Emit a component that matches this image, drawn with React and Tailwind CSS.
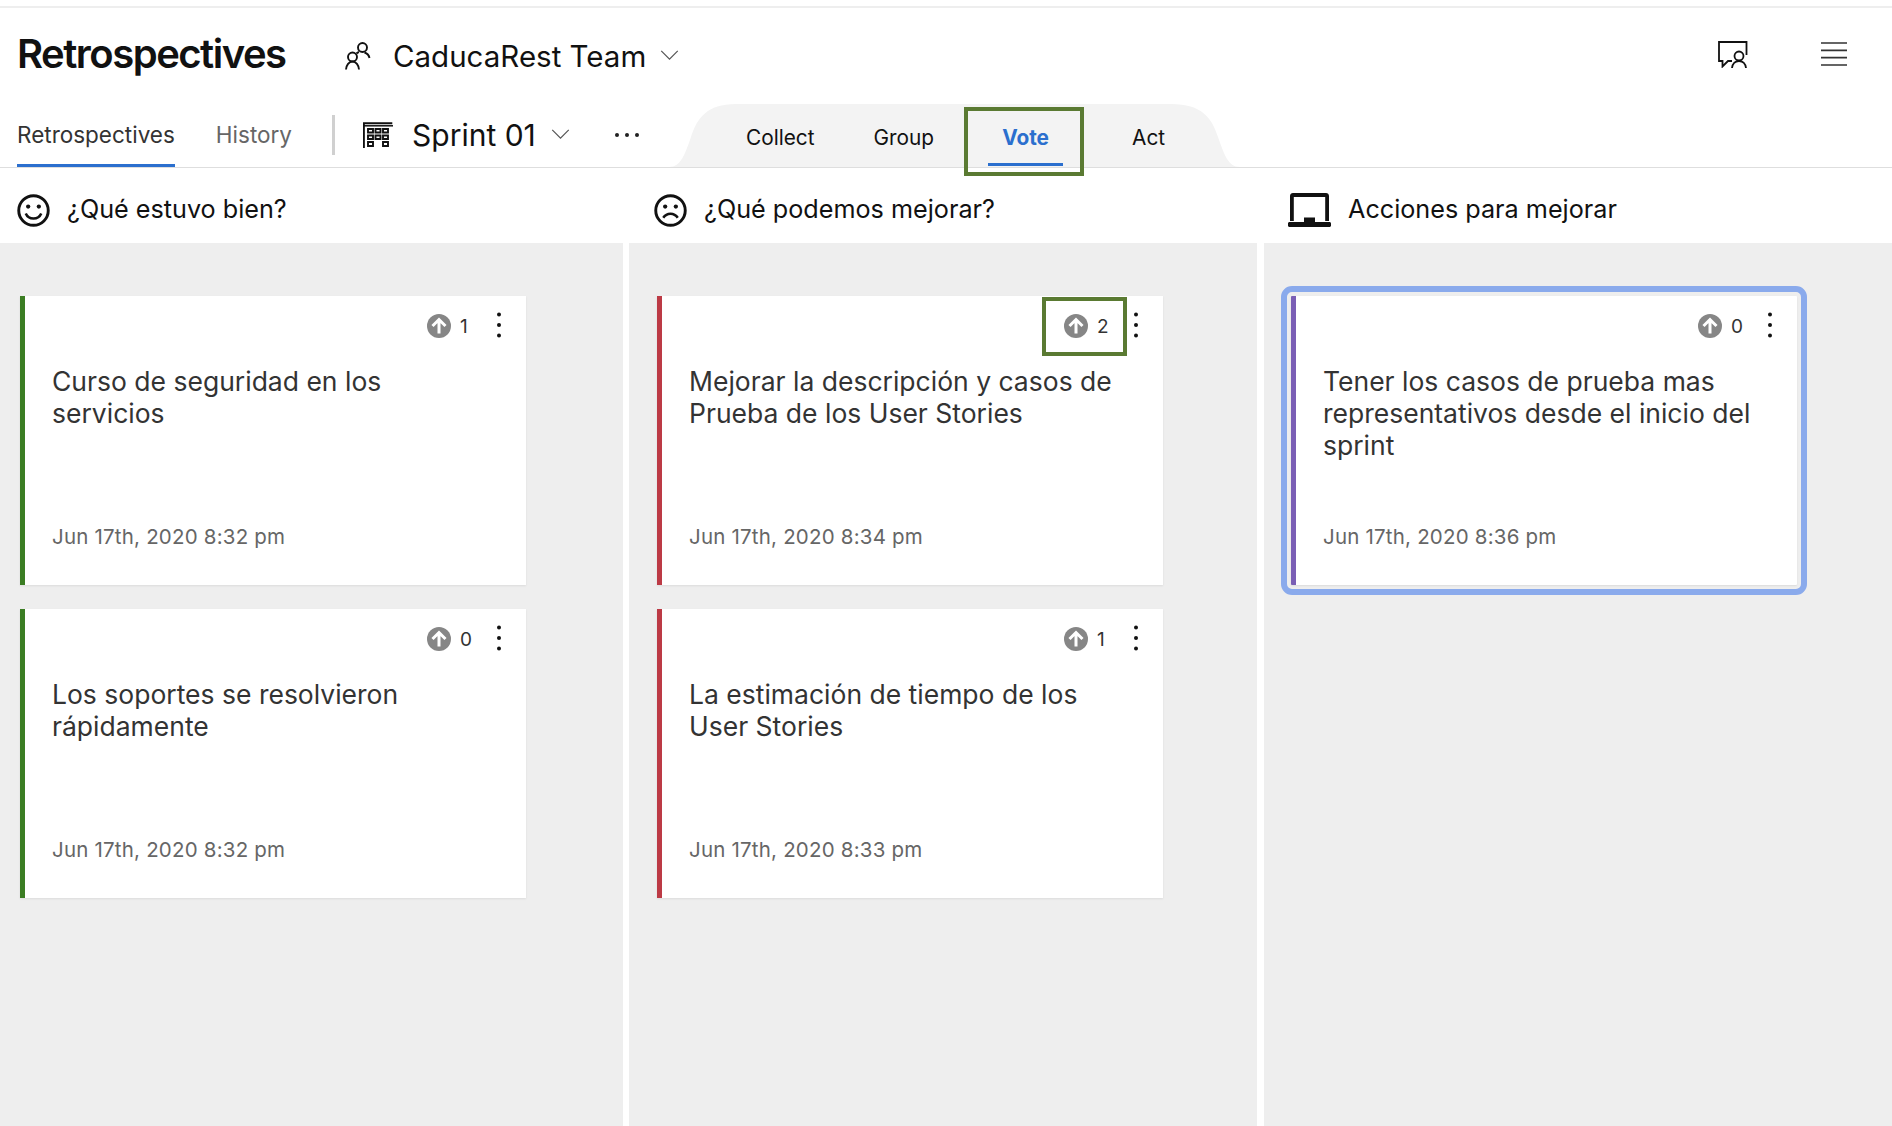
const Chevron = ({ className }) => (
  <svg viewBox="0 0 20 12" className={className} fill="none" stroke="#555" strokeWidth="1.3">
    <path d="M1 1l9 9 9-9" />
  </svg>
);

const Team = () => (
  <svg viewBox="0 0 26 28" className="w-[26px] h-[28px] shrink-0 mt-[4px]" fill="none" stroke="#111" strokeWidth="1.9">
    <circle cx="17.5" cy="5.5" r="4.5" />
    <path d="M19.5 10.5c2.5.8 4.5 3 5 5.5" />
    <circle cx="7.5" cy="15" r="4.5" />
    <path d="M1 27.5c.3-4.5 3-8 6.500-8s6.200 3.500 6.500 8" />
    <path d="M11.500 11.500c.6-.6 1.500-1.200 2.500-1.500" />
  </svg>
);

const Sprint = () => (
  <svg viewBox="0 0 30 26" className="w-[30px] h-[26px] shrink-0" fill="none" stroke="#111" strokeWidth="1.900">
    <path d="M.9 26V1.300h28.400" />
    <path d="M0 3.800h30" strokeWidth="1.500" />
    <path d="M5 7h5v3.500H5zM12.500 7h5v3.500h-5zM20 7h5v3.500h-5zM5 13.500h5V17H5zM12.500 13.500h5V17h-5zM20 13.500h5V17h-5zM5 20h5v4H5zM20 20h5v4h-5z" />
  </svg>
);

const Feedback = () => (
  <svg viewBox="0 0 30 27" className="w-[30px] h-[27px]" fill="none" stroke="#111" strokeWidth="1.800">
    <path d="M28.500 14V1H1v19h3.500v5.500L10 20h4" />
    <circle cx="21" cy="15" r="4.500" />
    <path d="M14 27c.4-4 3.200-7 7-7s6.600 3 7 7" />
  </svg>
);

const Menu = () => (
  <svg viewBox="0 0 26 24" className="w-[26px] h-[24px]" stroke="#333" strokeWidth="1.700">
    <path d="M0 1h26M0 8.300h26M0 15.600h26M0 23h26" />
  </svg>
);

const Face = ({ sad }) => (
  <svg viewBox="0 0 34 34" className="w-[33px] h-[33px] shrink-0" fill="none" stroke="#111" strokeWidth="3">
    <circle cx="17" cy="17" r="15.200" />
    <circle cx="11.500" cy="13" r="2.200" fill="#111" stroke="none" />
    <circle cx="22.500" cy="13" r="2.200" fill="#111" stroke="none" />
    {sad ? <path d="M9.500 24.500c2-3 4.500-4.200 7.500-4.200s5.500 1.200 7.500 4.200" strokeWidth="2.600" /> : <path d="M9 20c1.500 3.500 4.500 5.200 8 5.200s6.500-1.700 8-5.200" strokeWidth="2.600" />}
  </svg>
);

const Laptop = () => (
  <svg viewBox="0 0 43 34" className="w-[43px] h-[34px] shrink-0" fill="#111">
    <path d="M2 3C2 1.300 3.300 0 5 0h33c1.700 0 3 1.300 3 3v25h-3.800V4H5.800v24H2z" />
    <path d="M1.500 29H16v-4.500h11V29h14.500c.8 0 1.500.7 1.500 1.500v2c0 .8-.7 1.500-1.500 1.500h-40C.7 34 0 33.300 0 32.500v-2C0 29.700.7 29 1.500 29z" />
  </svg>
);

const VoteIcon = () => (
  <svg viewBox="0 0 24 24" className="w-[24px] h-[24px] shrink-0">
    <circle cx="12" cy="12" r="12" fill="#868686" />
    <path d="M12 19.500V6.500M5.500 12L12 5.500l6.500 6.500" fill="none" stroke="#fff" strokeWidth="3" />
  </svg>
);

const Dots = () => (
  <svg viewBox="0 0 6 26" className="w-[6px] h-[26px] shrink-0" fill="#111">
    <circle cx="3" cy="2.500" r="2" />
    <circle cx="3" cy="13" r="2" />
    <circle cx="3" cy="23.500" r="2" />
  </svg>
);

const Card = ({ bar, text, date, votes, boxed, focused }) => (
  <div
    className={`relative h-[289px] w-[506px] flex flex-col bg-white border-l-[5px] shadow-[0_1px_2px_rgba(0,0,0,0.08)] ${bar} ${
      focused ? "outline-[6px] outline-solid outline-[#8aaaec] outline-offset-[4px] rounded-[1px]" : ""
    }`}
  >
    <div className="flex items-center justify-end h-[48px] pt-[12px] pr-[24px]">
      <VoteIcon />
      <span className="ml-[9px] w-[10px] text-[19px] leading-none text-[#333]">{votes}</span>
      <span className="ml-[26px] -mt-[2px]">
        <Dots />
      </span>
    </div>
    <p className="mt-[21px] ml-[27px] w-[440px] text-[26.500px] leading-[32px] text-[#333]">{text}</p>
    <p className="mt-auto mb-[36px] pl-[27px] text-[20.500px] leading-[25px] tracking-[0.2px] text-[#666]">{date}</p>
    {boxed && <div className="absolute left-[380px] top-[1px] w-[85px] h-[59px] border-[4px] border-[#5a7a32]" />}
  </div>
);

const ColumnHeader = ({ icon, title, className }) => (
  <div className={`flex items-center h-[75px] pt-[9px] ${className}`}>
    {icon}
    <span className="text-[25.200px] text-[#111]">{title}</span>
  </div>
);

export default function App() {
  return (
    <div className="min-h-[1126px] flex flex-col bg-white font-['Inter','Liberation_Sans',sans-serif] overflow-hidden">
      <div className="h-[8px] border-b-[2px] border-[#eeeeee]" />
      <header className="h-[92px] flex items-center pl-[17px] pr-[45px]">
        <h1 className="w-[328px] text-[40px] leading-none font-semibold tracking-[-1.500px] text-[#111]">Retrospectives</h1>
        <Team />
        <span className="ml-[22px] mt-[6px] text-[29.500px] leading-none text-[#111]">CaducaRest Team</span>
        <Chevron className="ml-[14px] mt-[3px] w-[19px] h-[11px]" />
        <div className="ml-auto flex items-center gap-[73px]">
          <Feedback />
          <Menu />
        </div>
      </header>
      <nav className="relative h-[68px] flex items-start border-b-[1px] border-[#dedede] pl-[17px]">
        <div className="relative h-[67px] flex items-center text-[22.500px] text-[#333] pt-[2px]">
          Retrospectives
          <div className="absolute left-0 right-0 bottom-0 h-[3px] bg-[#2b6fce]" />
        </div>
        <div className="ml-[41px] h-[67px] flex items-center text-[22.500px] text-[#666] pt-[2px]">History</div>
        <div className="ml-[40px] mt-[15px] w-[3px] h-[40px] bg-[#d0d0d0]" />
        <div className="ml-[28px] h-[67px] flex items-center pt-[2px]">
          <Sprint />
        </div>
        <div className="ml-[19px] h-[67px] flex items-center text-[30px] text-[#111] pt-[3px]">Sprint 01</div>
        <div className="ml-[15px] h-[67px] flex items-center pt-[2px]">
          <Chevron className="w-[19px] h-[11px]" />
        </div>
        <div className="ml-[45px] h-[67px] flex items-center gap-[6px] pt-[3px]">
          <span className="w-[4px] h-[4px] rounded-full bg-[#222]" />
          <span className="w-[4px] h-[4px] rounded-full bg-[#222]" />
          <span className="w-[4px] h-[4px] rounded-full bg-[#222]" />
        </div>
        <div className="absolute left-[669px] top-[4px] w-[571px] h-[63px] flex text-[20.800px]">
          <svg viewBox="0 0 571 63" className="absolute inset-0 w-[571px] h-[63px]" fill="#f3f3f3">
            <path d="M0 63C12 63 16 50 22 33C28 14 38 0 67 0H502C533 0 543 14 549 33C555 50 559 63 571 63Z" />
          </svg>
          <div className="relative ml-[77px] mt-[18px] text-[#111]">Collect</div>
          <div className="relative ml-[59px] mt-[18px] text-[#111]">Group</div>
          <div className="relative ml-[54px] w-[75px] h-[62px] pt-[18px] text-center font-bold text-[#2b6fce]">
            Vote
            <div className="absolute left-0 right-0 bottom-0 h-[3px] bg-[#2b6fce]" />
          </div>
          <div className="relative ml-[69px] mt-[18px] text-[#111]">Act</div>
          <div className="absolute left-[295px] top-[3px] w-[120px] h-[69px] border-[4px] border-[#5a7a32]" />
        </div>
      </nav>
      <main className="flex-1 flex">
        <section className="w-[623px] flex flex-col">
          <ColumnHeader className="pl-[17px] gap-[17px]" icon={<Face />} title="¿Qué estuvo bien?" />
          <div className="flex-1 bg-[#eeeeee] pt-[53px] pl-[20px] flex flex-col gap-[24px]">
            <Card bar="border-[#3b7d23]" votes="1" text="Curso de seguridad en los servicios" date="Jun 17th, 2020 8:32 pm" />
            <Card bar="border-[#3b7d23]" votes="0" text="Los soportes se resolvieron rápidamente" date="Jun 17th, 2020 8:32 pm" />
          </div>
        </section>
        <section className="ml-[6px] w-[628px] flex flex-col">
          <ColumnHeader className="pl-[25px] gap-[17px]" icon={<Face sad />} title="¿Qué podemos mejorar?" />
          <div className="flex-1 bg-[#eeeeee] pt-[53px] pl-[28px] flex flex-col gap-[24px]">
            <Card bar="border-[#bc3a45]" votes="2" boxed text="Mejorar la descripción y casos de Prueba de los User Stories" date="Jun 17th, 2020 8:34 pm" />
            <Card bar="border-[#bc3a45]" votes="1" text="La estimación de tiempo de los User Stories" date="Jun 17th, 2020 8:33 pm" />
          </div>
        </section>
        <section className="ml-[7px] flex-1 flex flex-col">
          <ColumnHeader className="pl-[24px] gap-[17px]" icon={<Laptop />} title="Acciones para mejorar" />
          <div className="flex-1 bg-[#eeeeee] pt-[53px] pl-[27px] flex flex-col gap-[24px]">
            <Card bar="border-[#7a5fb5]" votes="0" focused text="Tener los casos de prueba mas representativos desde el inicio del sprint" date="Jun 17th, 2020 8:36 pm" />
          </div>
        </section>
      </main>
    </div>
  );
}
